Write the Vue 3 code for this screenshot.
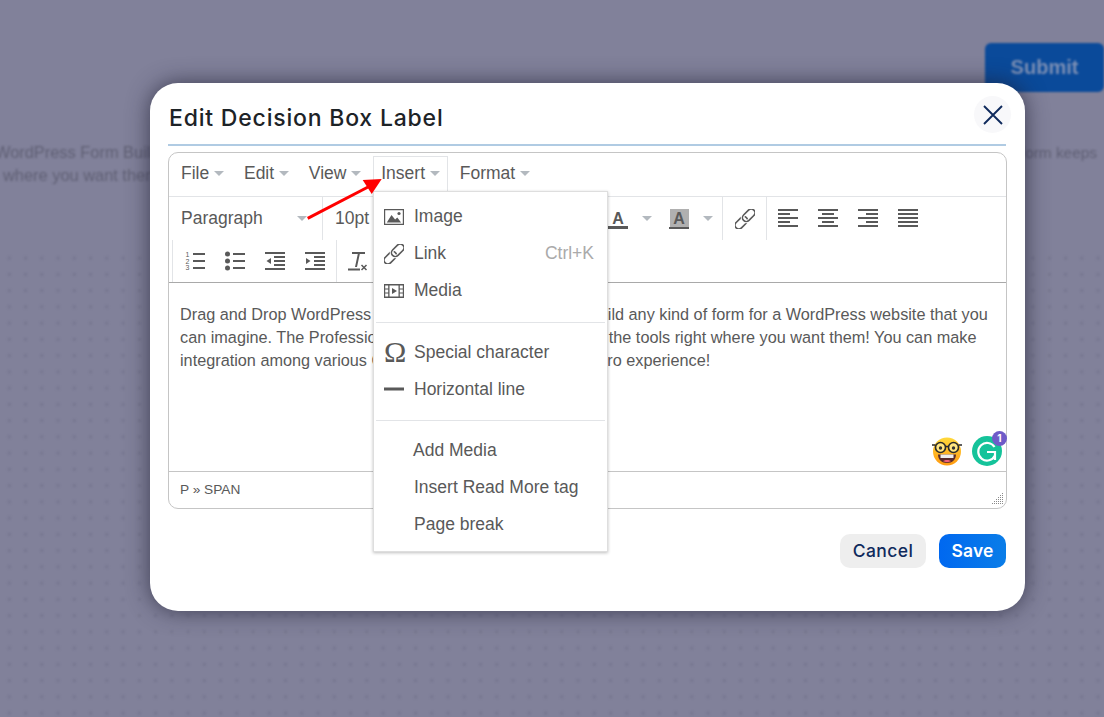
<script setup>
const menuGroups = [
  [
    { label: 'Image', icon: 'image' },
    { label: 'Link', icon: 'link', shortcut: 'Ctrl+K' },
    { label: 'Media', icon: 'media' }
  ],
  [
    { label: 'Special character', icon: 'omega' },
    { label: 'Horizontal line', icon: 'hr' }
  ],
  [
    { label: 'Add Media', icon: '', tight: true },
    { label: 'Insert Read More tag', icon: '' },
    { label: 'Page break', icon: '' }
  ]
]
const menus = ['File', 'Edit', 'View', 'Insert', 'Format']
const gripDots = []
for (let r = 0; r < 6; r++) {
  for (let c = 5 - r; c < 6; c++) gripDots.push({ x: c * 2, y: r * 2 })
}
</script>

<template>
  <div class="page">
    <div class="backdrop">
      <div class="bg-submit-row"><span class="bg-submit">Submit</span></div>
      <div class="bg-text">
        <div class="bg-line"><span class="l1">WordPress Form Builder</span><span class="r1">form keeps</span></div>
        <div class="bg-line"><span class="l2">where you want them</span></div>
      </div>
      <div class="dots"></div>
    </div>

    <div class="modal">
      <div class="modal-head">
        <h2>Edit Decision Box Label</h2>
        <button class="close" aria-label="Close">
          <svg width="20" height="20" viewBox="0 0 20 20"><path d="M1 1L19 19M19 1L1 19" stroke="#0f2a5c" stroke-width="1.9" fill="none"/></svg>
        </button>
      </div>
      <div class="rule"></div>

      <div class="editor">
        <div class="menubar">
          <div v-for="m in menus" :key="m" class="mb-item" :class="{ active: m === 'Insert' }">
            {{ m }}<i class="caret"></i>
          </div>
        </div>

        <div class="toolbar">
          <div class="row">
            <div class="select para">Paragraph<i class="caret"></i></div>
            <div class="select size">10pt</div>
            <div class="split s1">
              <svg class="ic" viewBox="0 0 20 20"><text x="10" y="14.5" text-anchor="middle" class="a">A</text><rect x="0" y="17" width="20" height="3" fill="#595959"/></svg>
              <i class="caret"></i>
            </div>
            <div class="split s2">
              <svg class="ic" viewBox="0 0 20 20"><rect x="1" width="19" height="18" fill="#b0b0b0"/><text x="10" y="14.5" text-anchor="middle" class="a">A</text><rect x="0" y="18" width="20" height="2" fill="#595959"/></svg>
              <i class="caret"></i>
            </div>
            <div class="btn link-btn">
              <svg class="ic" viewBox="0 0 20 20"><g transform="rotate(-45 10 10)" fill="none" stroke-width="1.6"><rect x="-2.5" y="6.2" width="14.5" height="7.6" rx="3.8" stroke="#595959"/><rect x="8" y="6.2" width="14.5" height="7.6" rx="3.8" stroke="#fff" stroke-width="3.6"/><rect x="8" y="6.2" width="14.5" height="7.6" rx="3.8" stroke="#595959"/></g></svg>
            </div>
            <div class="btn first">
              <svg class="ic" viewBox="0 0 20 20"><path d="M0 0h20v2H0zM0 4h12v2H0zM0 8h20v2H0zM0 12h12v2H0zM0 16h20v2H0z" fill="#595959"/></svg>
            </div>
            <div class="btn">
              <svg class="ic" viewBox="0 0 20 20"><path d="M0 0h20v2H0zM4 4h12v2H4zM0 8h20v2H0zM4 12h12v2H4zM0 16h20v2H0z" fill="#595959"/></svg>
            </div>
            <div class="btn">
              <svg class="ic" viewBox="0 0 20 20"><path d="M0 0h20v2H0zM8 4h12v2H8zM0 8h20v2H0zM8 12h12v2H8zM0 16h20v2H0z" fill="#595959"/></svg>
            </div>
            <div class="btn">
              <svg class="ic" viewBox="0 0 20 20"><path d="M0 0h20v2H0zM0 4h20v2H0zM0 8h20v2H0zM0 12h20v2H0zM0 16h20v2H0z" fill="#595959"/></svg>
            </div>
          </div>
          <div class="row row2">
            <div class="btn">
              <svg class="ic" viewBox="0 0 20 20"><text x="0.5" y="6" class="num">1</text><text x="0.5" y="12.5" class="num">2</text><text x="0.5" y="19" class="num">3</text><path d="M8 2h12v2H8zM8 9h12v2H8zM8 16h12v2H8z" fill="#595959"/></svg>
            </div>
            <div class="btn">
              <svg class="ic" viewBox="0 0 20 20"><circle cx="2.5" cy="3" r="2.5" fill="#595959"/><circle cx="2.5" cy="10" r="2.5" fill="#595959"/><circle cx="2.5" cy="17" r="2.5" fill="#595959"/><path d="M8 2h12v2H8zM8 9h12v2H8zM8 16h12v2H8z" fill="#595959"/></svg>
            </div>
            <div class="btn">
              <svg class="ic" viewBox="0 0 20 20"><path d="M0 1h20v2H0zM9 5h11v2H9zM9 9h11v2H9zM9 13h11v2H9zM0 17h20v2H0z" fill="#595959"/><path d="M6 7v6L1.5 10z" fill="#595959"/></svg>
            </div>
            <div class="btn">
              <svg class="ic" viewBox="0 0 20 20"><path d="M0 1h20v2H0zM9 5h11v2H9zM9 9h11v2H9zM9 13h11v2H9zM0 17h20v2H0z" fill="#595959"/><path d="M1 7v6l4.5-3z" fill="#595959"/></svg>
            </div>
            <div class="btn clear">
              <svg class="ic" viewBox="0 0 20 20"><path d="M4 1h13v2h-5.2L9 16H7L9.8 3H4zM0 17.6h12v2H0z" fill="#595959"/><path d="M13.5 14l5 5M18.5 14l-5 5" stroke="#595959" stroke-width="1.5"/></svg>
            </div>
          </div>
        </div>

        <div class="content">
          <p>Drag and Drop WordPress Forms Builder plugin lets you build any kind of form for a WordPress website that you</p>
          <p>can imagine. The Professional version of the plugin puts all the tools right where you want them! You can make</p>
          <p>integration among various CRM and chat apps for a great pro experience!</p>
          <div class="floaters">
            <svg width="30" height="30" viewBox="0 0 30 30">
              <defs><linearGradient id="f" x1="0" y1="0" x2="0" y2="1"><stop offset="0" stop-color="#ffd93b"/><stop offset="1" stop-color="#ff9a10"/></linearGradient></defs>
              <circle cx="15" cy="15.5" r="14" fill="url(#f)"/>
              <circle cx="8.5" cy="11.5" r="5" fill="#ffe680" stroke="#2a2a2a" stroke-width="1.6"/>
              <circle cx="21.5" cy="11.5" r="5" fill="#ffe680" stroke="#2a2a2a" stroke-width="1.6"/>
              <path d="M0 9h3.5M26.5 9h3.5M13.5 10.5h3" stroke="#2a2a2a" stroke-width="1.6"/>
              <circle cx="8.5" cy="12" r="1.7" fill="#333"/><circle cx="21.5" cy="12" r="1.7" fill="#333"/>
              <path d="M6 18.5h18c0 5-4 8.5-9 8.5s-9-3.5-9-8.5z" fill="#5a2a2a"/>
              <path d="M8.5 18.5h13v3.5h-13z" fill="#eee"/>
              <path d="M11 25c2-1.5 6-1.5 8 0-2 1.5-6 1.5-8 0z" fill="#f0607a"/>
            </svg>
            <div class="gr">
              <svg width="30" height="30" viewBox="0 0 30 30">
                <circle cx="15" cy="15" r="15" fill="#15c39a"/>
                <path d="M22.5 11A8.8 8.8 0 1 0 23 19.5" fill="none" stroke="#fff" stroke-width="2.2"/>
                <path d="M15 16h8v8" fill="none" stroke="#fff" stroke-width="2.2"/>
              </svg>
              <span class="badge">1</span>
            </div>
          </div>
        </div>

        <div class="statusbar">
          <span>P » SPAN</span>
          <svg class="grip" width="12" height="12" viewBox="0 0 12 12">
            <rect v-for="(d, i) in gripDots" :key="i" :x="d.x" :y="d.y" width="1" height="1" fill="#8a8a8a"/>
          </svg>
        </div>
      </div>

      <div class="actions">
        <button class="cancel">Cancel</button>
        <button class="save">Save</button>
      </div>

      <div class="dropdown">
        <template v-for="(g, gi) in menuGroups" :key="gi">
          <div v-if="gi" class="sep"></div>
          <div v-for="it in g" :key="it.label" class="dd-item" :class="{ tight: it.tight }">
            <span class="dd-icon">
              <svg v-if="it.icon === 'image'" width="20" height="20" viewBox="0 0 20 20"><path d="M0 2h20v16H0zM1.2 3.200v13.600h17.600v-13.600z" fill="#595959" fill-rule="evenodd"/><path d="M2.800 15.500l4.700-7.500 3.600 4.500 2.200-2 3.800 5z" fill="#595959"/><circle cx="15" cy="6.500" r="1.600" fill="#595959"/></svg>
              <svg v-else-if="it.icon === 'link'" width="20" height="20" viewBox="0 0 20 20"><g transform="rotate(-45 10 10)" fill="none" stroke-width="1.6"><rect x="-2.5" y="6.2" width="14.5" height="7.6" rx="3.8" stroke="#595959"/><rect x="8" y="6.2" width="14.5" height="7.6" rx="3.8" stroke="#fff" stroke-width="3.6"/><rect x="8" y="6.2" width="14.5" height="7.6" rx="3.8" stroke="#595959"/></g></svg>
              <svg v-else-if="it.icon === 'media'" width="20" height="20" viewBox="0 0 20 20"><path d="M0 3h20v14H0zM5.500 4.500v11h9v-11zM1.200 4.500v3h3v-3zM1.200 8.500v3h3v-3zM1.200 12.500v3h3v-3zM15.800 4.500v3h3v-3zM15.800 8.500v3h3v-3zM15.800 12.500v3h3v-3z" fill="#595959" fill-rule="evenodd"/><path d="M8 7v6l5-3z" fill="#595959"/></svg>
              <span v-else-if="it.icon === 'omega'" class="omega">Ω</span>
              <svg v-else-if="it.icon === 'hr'" width="20" height="20" viewBox="0 0 20 20"><rect y="8.500" width="20" height="3" fill="#595959"/></svg>
            </span>
            <span class="dd-label">{{ it.label }}</span>
            <span v-if="it.shortcut" class="dd-short">{{ it.shortcut }}</span>
          </div>
        </template>
      </div>

      <svg class="arrow" width="80" height="50" viewBox="0 0 80 50">
        <path d="M1.700 45.300L64 13" stroke="#f00" stroke-width="3" fill="none"/>
        <path d="M75.700 6L56.700 7 65.700 21z" fill="#f00"/>
      </svg>
    </div>
  </div>
</template>

<style>
html, body { margin: 0; padding: 0; }
</style>

<style scoped>
.page {
  position: relative;
  width: 1104px;
  height: 717px;
  overflow: hidden;
  background-color: #81819a;
  font-family: "Liberation Sans", Arial, sans-serif;
}
.backdrop {
  height: 100%;
  box-sizing: border-box;
  padding-top: 43px;
  filter: blur(1.2px);
  display: flex;
  flex-direction: column;
}
.dots {
  flex: 1;
  margin-top: 63px;
  background-image: radial-gradient(circle at center, #6f6f88 0, #6f6f88 0.8px, transparent 1.5px);
  background-size: 16.25px 16.25px;
  background-position: 1.2px 0;
}
.bg-submit-row { display: flex; justify-content: flex-end; }
.bg-submit {
  box-sizing: border-box;
  width: 119px;
  height: 49px;
  line-height: 49px;
  text-align: center;
  background: #0a4a9a;
  color: #7b8fb5;
  border-radius: 6px;
  font-weight: 700;
  font-size: 20px;
}
.bg-text { margin-top: 49px; color: #5f5f74; font-size: 16.4px; line-height: 23px; }
.bg-line { display: flex; justify-content: space-between; padding-right: 7px; white-space: nowrap; height: 23px; }
.l1 { margin-left: -5px; }
.l2 { margin-left: 3px; }
.r1 { font-size: 15.4px; }

.modal {
  position: absolute;
  left: 150px;
  top: 83px;
  box-sizing: border-box;
  width: 875px;
  height: 528px;
  background: #fff;
  border-radius: 28px;
  padding: 12px 18px 0;
  box-shadow: 0 0 22px rgba(30, 30, 50, 0.7);
}
.modal-head { display: flex; justify-content: space-between; align-items: center; height: 38px; }
h2 {
  margin: 8px 0 0 1px;
  font-family: Inter, sans-serif;
  font-weight: 500;
  font-size: 23px;
  letter-spacing: 0.8px;
  color: #1d2327;
}
.close {
  width: 37px;
  height: 37px;
  margin-right: -4px;
  margin-top: 1px;
  border: 0;
  border-radius: 50%;
  background: #f8f8fa;
  display: flex;
  align-items: center;
  justify-content: center;
  padding: 0;
}
.rule { height: 2px; background: #b0cbe3; margin-top: 11px; width: 838px; }
.editor {
  box-sizing: border-box;
  margin-top: 6px;
  width: 839px;
  height: 357px;
  border: 1px solid #c5c5c5;
  border-radius: 10px;
  display: flex;
  flex-direction: column;
  color: #595959;
  font-size: 17.5px;
}
.menubar {
  height: 44px;
  flex: none;
  box-sizing: border-box;
  border-bottom: 1px solid #e2e4e7;
  display: flex;
  padding-top: 3px;
  padding-left: 4px;
}
.mb-item {
  box-sizing: border-box;
  height: 40px;
  padding: 0 7px;
  line-height: 33px;
  margin-right: 3.75px;
  border: 1px solid transparent;
  border-bottom: 0;
  white-space: nowrap;
}
.mb-item.active { border-color: #e2e4e7; background: #fff; }
.caret {
  display: inline-block;
  width: 0;
  height: 0;
  border-left: 5px solid transparent;
  border-right: 5px solid transparent;
  border-top: 5px solid #b3b9bf;
  margin-left: 5px;
  vertical-align: 3px;
}
.toolbar { height: 86px; flex: none; box-sizing: border-box; border-bottom: 1px solid #a9a9a9; }
.row { display: flex; height: 43px; }
.row2 { height: 42px; margin-left: 3px; padding-left: 2px; border-left: 1px solid #e2e4e7; }
.select { box-sizing: border-box; line-height: 43px; padding-left: 12px; white-space: nowrap; }
.para { width: 154px; border-right: 1px solid #e2e4e7; position: relative; }
.para .caret { position: absolute; right: 15px; top: 19px; margin: 0; }
.size { width: 275px; }
.split { display: flex; align-items: center; box-sizing: border-box; flex: none; }
.s1 { width: 62px; padding-left: 10px; }
.s2 { width: 63px; padding-left: 9px; border-right: 1px solid #e2e4e7; }
.split .caret { margin-left: 14px; }
.ic { width: 20px; height: 20px; display: block; }
.a { font: 700 16px "Liberation Sans", sans-serif; fill: #595959; }
.num { font: 7px "Liberation Sans", sans-serif; fill: #595959; }
.btn { width: 40px; display: flex; align-items: center; justify-content: center; flex: none; }
.link-btn { width: 44px; border-right: 1px solid #e2e4e7; box-sizing: border-box; }
.btn.first { margin-left: 1px; }
.clear { border-left: 1px solid #e2e4e7; width: 42px; box-sizing: border-box; margin-left: 1px; }
.content {
  flex: 1;
  position: relative;
  padding: 20px 11px 0;
  font-size: 16.25px;
  line-height: 23px;
  white-space: nowrap;
}
.content p { margin: 0; }
.floaters { position: absolute; right: 4px; bottom: 5px; display: flex; gap: 10px; align-items: flex-end; }
.gr { position: relative; height: 30px; }
.badge {
  position: absolute;
  right: -5px;
  top: -5px;
  width: 15px;
  height: 15px;
  border-radius: 50%;
  background: #6e5bc8;
  color: #fff;
  font: 700 10px/15px Inter, sans-serif;
  text-align: center;
}
.statusbar {
  height: 37px;
  flex: none;
  box-sizing: border-box;
  border-top: 1px solid #c5c5c5;
  padding-left: 11px;
  font-size: 13.7px;
  line-height: 35px;
  position: relative;
}
.grip { position: absolute; right: 2px; bottom: 3px; }
.actions { display: flex; justify-content: flex-end; gap: 13px; margin-top: 25px; padding-right: 1px; }
.actions button {
  height: 34px;
  border: 0;
  border-radius: 10px;
  font-family: Inter, sans-serif;
  font-size: 17.5px;
  padding: 0 0 2px;
}
.cancel { width: 86px; background: #eeeeee; color: #0f2a5c; font-weight: 500; letter-spacing: 0.4px; }
.save { width: 67px; background: linear-gradient(90deg, #0068f0, #0a7de8); color: #fff; font-weight: 600; letter-spacing: 0.2px; }

.dropdown {
  position: absolute;
  left: 223px;
  top: 108px;
  width: 235px;
  box-sizing: border-box;
  padding: 6px 0 8px;
  background: #fff;
  border: 1px solid #dedede;
  box-shadow: 0 1px 3px rgba(0, 0, 0, 0.25);
  color: #595959;
  font-size: 17.5px;
}
.dd-item { height: 37.2px; display: flex; align-items: center; padding: 0 13px 0 10px; }
.dd-icon { width: 30px; display: flex; align-items: center; flex: none; }
.dd-item.tight .dd-icon { width: 29px; }
.omega { font: 30px/22px "Liberation Serif", serif; color: #595959; }
.dd-short { margin-left: auto; color: #aaa; }
.sep { height: 1px; background: #e2e4e7; margin: 12px 2px 10.9px; }
.arrow { position: absolute; left: 156px; top: 90px; }
</style>
